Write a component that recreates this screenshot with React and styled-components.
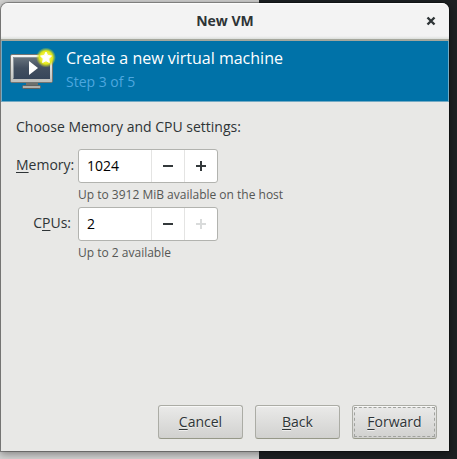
import React, { useState } from "react";
import styled, { createGlobalStyle } from "styled-components";

const GlobalStyle = createGlobalStyle`
  * { box-sizing: border-box; }
  body {
    margin: 0;
    font-family: "Open Sans", "Noto Sans", sans-serif;
    font-size: 14px;
    line-height: 20px;
    color: #2e3436;
  }
  button, input { font: inherit; color: inherit; }
`;

const Desktop = styled.div`
  display: flex;
  min-height: 100vh;
  padding: 3px 8px 8px 1px;
  background: linear-gradient(90deg, #d4d4d3 259px, #1d2123 259px);
`;

const Dialog = styled.main`
  flex: 1;
  display: flex;
  flex-direction: column;
  min-width: 0;
  background: #e8e8e6;
  border-radius: 7px 7px 0 0;
  overflow: hidden;
  box-shadow: 0 0 0 1px rgba(0, 0, 0, 0.3), 0 2px 8px 1px rgba(0, 0, 0, 0.4);
`;

const TitleBar = styled.header`
  display: grid;
  grid-template-columns: 36px 1fr 36px;
  align-items: center;
  height: 38px;
  background: linear-gradient(#ffffff, #f3f3f3 2px, #f3f3f3 33px, #dcdfdc);
  border-bottom: 2px solid #a5a79c;
`;

const Title = styled.h1`
  grid-column: 2;
  margin: 0;
  font-size: 14px;
  font-weight: 700;
  text-align: center;
`;

const CloseButton = styled.button`
  display: grid;
  place-items: center;
  height: 36px;
  padding: 0;
  border: 0;
  background: none;
`;

const Banner = styled.section`
  display: flex;
  gap: 9px;
  height: 61px;
  padding: 5px 7px;
  color: #ffffff;
  background: #0072a8;
  border: 1px solid #73aac4;
  border-width: 0 1px 1px;
`;

const BannerTitle = styled.h2`
  margin: 0;
  font-size: 16px;
  line-height: 24px;
  font-weight: 400;
`;

const Step = styled.p`
  margin: 0;
  line-height: 24px;
  color: #4da7df;
`;

const Form = styled.form`
  flex: 1;
  display: flex;
  flex-direction: column;
  padding: 15px 12px 12px 15px;
`;

const Intro = styled.p`
  margin: 0 0 12px;
`;

const Fields = styled.div`
  display: grid;
  grid-template-columns: 55px 1fr;
  column-gap: 7px;
`;

const Label = styled.label`
  height: 32px;
  line-height: 32px;
  text-align: right;
  white-space: nowrap;
`;

const Mnemonic = styled.span`
  text-decoration: underline;
  text-decoration-thickness: 1px;
  text-underline-offset: 2px;
  text-decoration-skip-ink: none;
`;

const SpinBox = styled.div`
  display: flex;
  width: 140px;
  height: 34px;
  background: #ffffff;
  border: 1px solid #b2b3af;
  border-radius: 3px;
`;

const SpinInput = styled.input`
  flex: 1;
  min-width: 0;
  padding: 0 8px;
  border: 0;
  outline: 0;
  background: none;
  color: #000000;
`;

const SpinButton = styled.button`
  display: grid;
  place-items: center;
  width: 33px;
  padding: 0;
  border: 0;
  border-left: 1px solid #e4e4e3;
  background: none;
  color: #33393b;
  &:disabled { color: #d9dbdb; }
`;

const Hint = styled.p`
  grid-column: 2;
  margin: 0;
  height: 24px;
  font-size: 12px;
  line-height: 24px;
  color: #555755;
`;

const Actions = styled.footer`
  display: flex;
  justify-content: flex-end;
  gap: 12px;
  margin-top: auto;
`;

const Action = styled.button`
  width: 85px;
  height: 34px;
  padding: 0;
  border: 1px solid #abaca5;
  border-bottom-color: #969888;
  border-radius: 3px;
  background: linear-gradient(#eaeae9, #d1d1cf);
  box-shadow: inset 0 1px #f8f8f7;
  text-shadow: 0 1px rgba(255, 255, 255, 0.6);
  outline: ${(p) => (p.$focused ? "1px dashed #a0a29e" : "none")};
  outline-offset: -3px;
`;

const Icon = styled.svg`
  display: block;
  flex: none;
`;

function MachineIcon() {
  return (
    <Icon width="48" height="48" viewBox="0 0 48 48" aria-hidden="true">
      <defs>
        <linearGradient id="screen" x1="0" y1="0" x2="0" y2="1">
          <stop offset="0" stopColor="#69747e" />
          <stop offset="0.5" stopColor="#424f60" />
          <stop offset="1" stopColor="#37465a" />
        </linearGradient>
        <linearGradient id="frame" x1="0" y1="0" x2="0" y2="1">
          <stop offset="0" stopColor="#f5f5f3" />
          <stop offset="1" stopColor="#bdbeba" />
        </linearGradient>
        <radialGradient id="glow">
          <stop offset="0.3" stopColor="#f6f65a" />
          <stop offset="0.65" stopColor="#e3e817" />
          <stop offset="1" stopColor="#c6dc28" stopOpacity="0" />
        </radialGradient>
      </defs>
      <path d="M17 37h12v3H17z" fill="#6c706d" />
      <rect x="13.5" y="39.5" width="18" height="3" rx="1" fill="#aeb0ac" stroke="#62625f" />
      <rect x="1.5" y="8.5" width="42" height="28" rx="1.5" fill="url(#frame)" stroke="#737572" />
      <path d="M2 33h41v2q0 1-1 1H3q-1 0-1-1z" fill="#bfc0bd" />
      <rect x="4" y="11" width="37" height="22" fill="url(#screen)" />
      <path d="M4.500 32.500v-21h36" fill="none" stroke="#8c959b" />
      <path d="M20 15v14l9-7z" fill="#ffffff" />
      <circle cx="37" cy="11.5" r="10" fill="url(#glow)" />
      <path d="M37 6l1.700 3.500 3.800.5-2.800 2.700.7 3.800-3.400-1.800-3.400 1.800.7-3.800-2.800-2.700 3.800-.5z" fill="#ffffff" stroke="#ffffff" />
    </Icon>
  );
}

function SpinField({ id, label, hint, initial, max }) {
  const [value, setValue] = useState(initial);
  const change = (step) => setValue(Math.max(1, Math.min(max, Number(value) + step)));
  return (
    <>
      <Label htmlFor={id}>{label}</Label>
      <SpinBox>
        <SpinInput
          id={id}
          inputMode="numeric"
          value={value}
          onChange={(e) => setValue(e.target.value)}
        />
        <SpinButton type="button" aria-label="Decrease" onClick={() => change(-1)}>
          <Icon width="12" height="12" viewBox="0 0 12 12">
            <path d="M1 5h10v2H1z" fill="currentColor" />
          </Icon>
        </SpinButton>
        <SpinButton
          type="button"
          aria-label="Increase"
          disabled={Number(value) >= max}
          onClick={() => change(1)}
        >
          <Icon width="12" height="12" viewBox="0 0 12 12">
            <path d="M1 5h4V1h2v4h4v2H7v4H5V7H1z" fill="currentColor" />
          </Icon>
        </SpinButton>
      </SpinBox>
      <Hint>{hint}</Hint>
    </>
  );
}

export default function App() {
  return (
    <Desktop>
      <GlobalStyle />
      <Dialog>
        <TitleBar>
          <Title>New VM</Title>
          <CloseButton type="button" aria-label="Close">
            <Icon width="10" height="10" viewBox="0 0 10 10">
              <path d="M1.500 1.500l7 7M8.500 1.500l-7 7" stroke="#2e3436" strokeWidth="2.400" />
            </Icon>
          </CloseButton>
        </TitleBar>
        <Banner>
          <MachineIcon />
          <div>
            <BannerTitle>Create a new virtual machine</BannerTitle>
            <Step>Step 3 of 5</Step>
          </div>
        </Banner>
        <Form onSubmit={(e) => e.preventDefault()}>
          <Intro>Choose Memory and CPU settings:</Intro>
          <Fields>
            <SpinField
              id="memory"
              label={<><Mnemonic>M</Mnemonic>emory:</>}
              hint="Up to 3912 MiB available on the host"
              initial={1024}
              max={3912}
            />
            <SpinField
              id="cpus"
              label={<>C<Mnemonic>P</Mnemonic>Us:</>}
              hint="Up to 2 available"
              initial={2}
              max={2}
            />
          </Fields>
          <Actions>
            <Action type="button"><Mnemonic>C</Mnemonic>ancel</Action>
            <Action type="button"><Mnemonic>B</Mnemonic>ack</Action>
            <Action type="submit" $focused><Mnemonic>F</Mnemonic>orward</Action>
          </Actions>
        </Form>
      </Dialog>
    </Desktop>
  );
}
